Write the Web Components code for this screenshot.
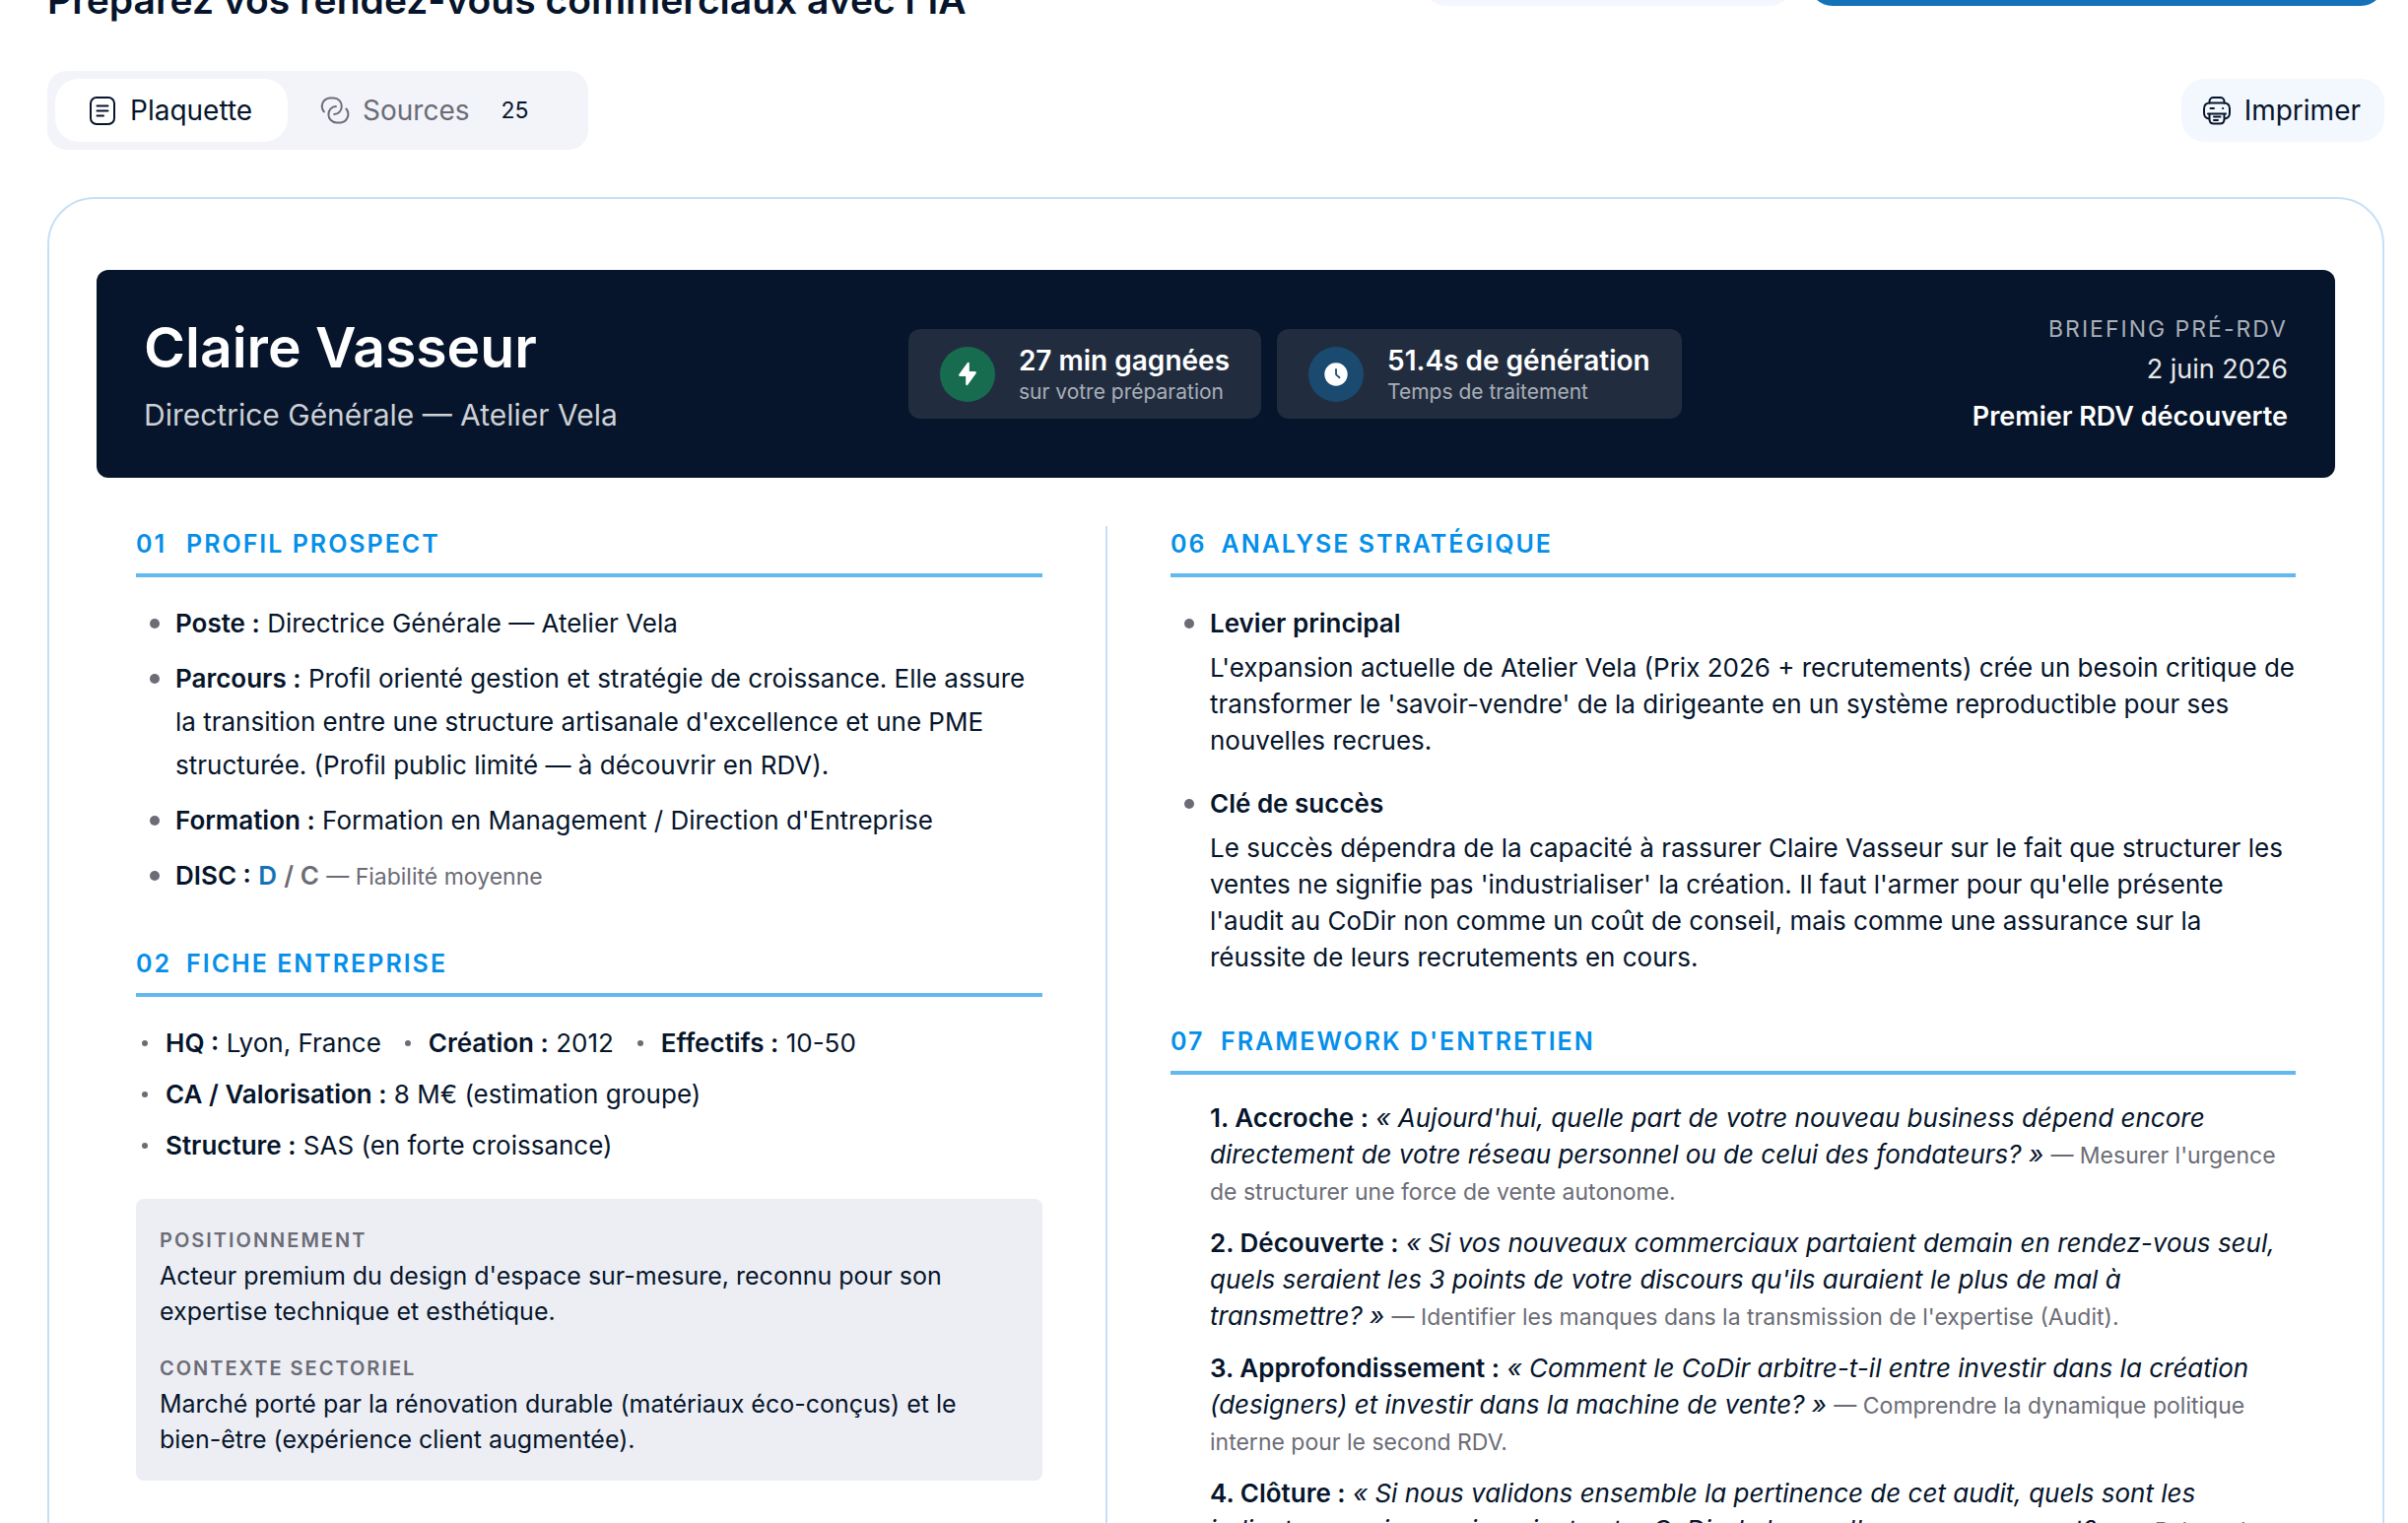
<!DOCTYPE html>
<html lang="fr">
<head>
<meta charset="utf-8">
<title>Plaquette – Claire Vasseur</title>
<style>
  :root {
    --ink: #06152b; --muted: #6b6c76; --brand: #1372b8; --accent: #058fe9;
    --rule: #62b9f0; --line: #c4e0f8; --soft: #f3f7fe; --panel: #edeef4;
    --fs-body: 26px; --fs-note: 23px;
  }
  html { scrollbar-width: none; }
  body { margin: 0; background: #fff; color: var(--ink); font: 400 26px/37px Inter, "Noto Sans", sans-serif; }
</style>
</head>
<body>
<briefing-page></briefing-page>

<script>
const define = (name, html) => {
  const tpl = document.createElement('template');
  tpl.innerHTML = html;
  customElements.define(name, class extends HTMLElement {
    constructor() {
      super();
      this.attachShadow({ mode: 'open' }).append(tpl.content.cloneNode(true));
    }
    connectedCallback() {
      this.shadowRoot.querySelectorAll('[data-attr]').forEach(n => {
        n.textContent = this.getAttribute(n.dataset.attr) || '';
      });
    }
  });
};

define('page-header', `
<style>
  :host { display: flex; justify-content: space-between; align-items: flex-start; height: 86px; margin-top: -58px; }
  h1 { align-self: flex-end; margin: 0; font-size: 39px; line-height: 56px; font-weight: 600; }
  .actions { display: flex; gap: 16px; }
  button { height: 64px; border: 0; border-radius: 24px; background: var(--soft); width: 376px; }
  .primary { background: var(--brand); width: 584px; }
</style>
<h1><slot></slot></h1>
<div class="actions"><button aria-label="Historique"></button><button class="primary" aria-label="Nouvelle préparation"></button></div>`);

define('view-tabs', `
<style>
  :host { display: flex; padding: 8px; border-radius: 20px; background: #f3f4f9; }
  button { display: flex; align-items: center; gap: 12px; height: 64px; padding: 0 32px; border: 0; border-radius: 24px;
    background: none; font: inherit; font-size: 28px; color: var(--muted); }
  button[aria-selected=true] { min-width: 236px; background: #fff; color: var(--ink); }
  svg { width: 32px; height: 32px; fill: none; stroke: currentColor; stroke-width: 2; stroke-linecap: round; stroke-linejoin: round; }
  .count { padding: 0 20px; font-size: 23px; color: var(--ink); }
</style>
<button role="tab" aria-selected="true">
  <svg viewBox="0 0 32 32"><rect x="4" y="3" width="24" height="27" rx="6"/><path d="M10.500 11.500h11M10.500 16.500h11M10.500 21.500h6.500"/></svg>
  Plaquette</button>
<button role="tab" aria-selected="false">
  <svg viewBox="0 0 32 32"><path d="M4.800 17.400a8.600 8.600 0 0 1 5.600-14h4.200a8.300 8.300 0 0 1 8.200 8.300c0 4.600-3.300 8.300-7.600 8.300"/><path d="M27.400 14.500a8.600 8.600 0 0 1-5.600 14h-4.200a8.300 8.300 0 0 1-8.200-8.300c0-4.600 3.300-8.300 7.600-8.300"/></svg>
  Sources <span class="count">25</span></button>`);

define('print-button', `
<style>
  :host { display: block; }
  button { display: flex; align-items: center; gap: 12px; height: 64px; padding: 0 24px 0 20px; border: 0; border-radius: 24px;
    background: var(--soft); font: inherit; font-size: 28px; color: var(--ink); }
  svg { width: 32px; height: 32px; fill: none; stroke: currentColor; stroke-width: 2; stroke-linecap: round; stroke-linejoin: round; }
</style>
<button>
  <svg viewBox="0 0 32 32"><path d="M8.500 8.500V7a4 4 0 0 1 4-4h7a4 4 0 0 1 4 4v1.500"/><path d="M8 24.500c-3-.3-5-2.200-5-6v-4c0-4 2-6 6-6h14c4 0 6 2 6 6v4c0 3.800-2 5.700-5 6"/><path d="M7 19.500h18M8.500 19.500V25c0 3 1.500 4.500 4.500 4.500h6c3 0 4.500-1.500 4.500-4.500v-5.500M13 22.500h6.500M13 26h4M9.500 14h3.500M22 14h.2"/></svg>
  <slot></slot></button>`);

define('stat-chip', `
<style>
  :host { display: flex; align-items: center; gap: 24px; padding: 14px 32px 13px; border-radius: 12px; background: #212d3f; }
  .dot { display: grid; place-items: center; width: 56px; height: 56px; border-radius: 50%; background: var(--dot); }
  .t { font-size: 28px; line-height: 36px; font-weight: 600; color: #fff; }
  .s { font-size: 21px; line-height: 28px; color: #a9aeb7; }
</style>
<div class="dot"><slot name="icon"></slot></div>
<div><div class="t" data-attr="value"></div><div class="s" data-attr="caption"></div></div>`);

define('briefing-hero', `
<style>
  :host { display: flex; justify-content: space-between; align-items: center; padding: 40px 48px; border-radius: 12px; background: var(--ink); color: #fff; }
  h2 { margin: 0 0 5px; font-size: 57px; line-height: 78px; font-weight: 600; }
  .role { font-size: 30px; line-height: 48px; color: #cdd0d5; }
  .stats { display: flex; gap: 16px; }
  .meta { padding-top: 2px; text-align: right; font-size: 27px; line-height: 44px; }
  .kicker { font-size: 23px; line-height: 37px; letter-spacing: 2px; color: #a9aeb7; }
  .date { color: #e6e8ea; margin-bottom: 4px; }
  .kind { font-weight: 600; }
  svg { display: block; width: 28px; height: 28px; }
</style>
<div><h2>Claire Vasseur</h2><div class="role">Directrice Générale — Atelier Vela</div></div>
<div class="stats">
  <stat-chip style="--dot:#176c50" value="27 min gagnées" caption="sur votre préparation">
    <svg slot="icon" viewBox="0 0 28 28" fill="#fff"><path d="M15.800 3.200v7.900h5.700c1.300 0 1.800 1.200 1 2.200l-8.200 11.200c-.8 1.100-2.100.7-2.100-.7v-7.900H6.500c-1.300 0-1.800-1.200-1-2.200l8.200-11.200c.8-1.100 2.100-.7 2.100.7z"/></svg>
  </stat-chip>
  <stat-chip style="--dot:#1a4a70" value="51.4s de génération" caption="Temps de traitement">
    <svg slot="icon" viewBox="0 0 28 28"><circle cx="14" cy="14" r="11.700" fill="#fff"/><path d="M14 9v4.500c0 .6.200 1 .7 1.400l2.800 2.300" fill="none" stroke="#1a4a70" stroke-width="1.800" stroke-linecap="round"/></svg>
  </stat-chip>
</div>
<div class="meta"><div class="kicker">BRIEFING PRÉ-RDV</div><div class="date">2 juin 2026</div><div class="kind">Premier RDV découverte</div></div>`);

define('brief-section', `
<style>
  :host { display: block; }
  h3 { display: flex; gap: 15px; margin: 0 0 25px; padding-bottom: 12px; border-bottom: 4px solid var(--rule);
    font-size: 25px; line-height: 36px; font-weight: 600; letter-spacing: 2px; color: var(--accent); }
  h3 span:first-child { min-width: 36px; }
</style>
<h3><span data-attr="num"></span><span data-attr="heading"></span></h3>
<slot></slot>`);

define('bullet-item', `
<style>
  :host { display: grid; grid-template-columns: 10px 1fr; column-gap: 16px; padding-left: 14px; margin-bottom: 12px; line-height: 44px; }
  :host(:last-child) { margin-bottom: 0; }
  .dot { width: 10px; height: 10px; margin-top: 17px; border-radius: 50%; background: var(--muted); }
  b { font-weight: 600; }
</style>
<span class="dot"></span><div><b data-attr="label"></b> <slot></slot></div>`);

define('fact-item', `
<style>
  :host { display: flex; align-items: center; gap: 18px; padding-left: 6px; line-height: 44px; }
  .dot { width: 6px; height: 6px; border-radius: 50%; background: var(--muted); }
  b { font-weight: 600; }
</style>
<span class="dot"></span><div><b data-attr="label"></b> <slot></slot></div>`);

define('context-panel', `
<style>
  :host { display: flex; flex-direction: column; gap: 22px; margin-top: 32px; padding: 24px; border-radius: 8px; background: var(--panel); }
</style><slot></slot>`);

define('context-note', `
<style>
  :host { display: block; font-size: 25px; line-height: 36px; }
  .k { font-size: 20px; font-weight: 600; letter-spacing: 2px; color: var(--muted); }
</style><div class="k" data-attr="label"></div><slot></slot>`);

define('insight-item', `
<style>
  :host { display: grid; grid-template-columns: 10px 1fr; column-gap: 16px; padding-left: 14px; margin-bottom: 24px; }
  :host(:last-child) { margin-bottom: 0; }
  .dot { width: 10px; height: 10px; margin-top: 17px; border-radius: 50%; background: var(--muted); }
  .k { margin-bottom: 4px; font-weight: 600; line-height: 44px; }
</style>
<span class="dot"></span><div><div class="k" data-attr="label"></div><slot></slot></div>`);

define('interview-step', `
<style>
  :host { display: block; padding-left: 40px; margin-bottom: 16px; }
  b { font-weight: 600; }
  .why { font-size: var(--fs-note); line-height: 28px; color: var(--muted); }
</style>
<b data-attr="label"></b> <i><slot></slot></i> <span class="why" data-attr="why"></span>`);

define('briefing-page', `
<style>
  :host { display: block; padding: 0 24px 0 48px; }
  .toolbar { display: flex; justify-content: space-between; align-items: center; margin: 44px 0 48px; }
  .card { border: 2px solid var(--line); border-radius: 48px; padding: 72px 48px 72px; }
  .cols { display: grid; grid-template-columns: 986px 1fr; margin-top: 49px; padding: 0 40px; }
  .col { display: flex; flex-direction: column; gap: 49px; }
  .col:first-child { padding-right: 64px; border-right: 2px solid var(--line); }
  .col:last-child { padding-left: 64px; }
  .facts { display: flex; flex-wrap: wrap; gap: 8px 18px; }
  .facts .wide { flex-basis: 100%; }
  .d { color: var(--brand); font-weight: 600; }
  .c { color: var(--muted); font-weight: 600; }
  .note { color: var(--muted); font-size: var(--fs-note); line-height: 28px; }
</style>
<page-header>Préparez vos rendez-vous commerciaux avec l'IA</page-header>
<div class="toolbar"><view-tabs role="tablist"></view-tabs><print-button>Imprimer</print-button></div>
<main class="card">
  <briefing-hero></briefing-hero>
  <div class="cols">
    <div class="col">
      <brief-section num="01" heading="PROFIL PROSPECT">
        <bullet-item label="Poste :">Directrice Générale — Atelier Vela</bullet-item>
        <bullet-item label="Parcours :">Profil orienté gestion et stratégie de croissance. Elle assure la transition entre une structure artisanale d'excellence et une PME structurée. (Profil public limité — à découvrir en RDV).</bullet-item>
        <bullet-item label="Formation :">Formation en Management / Direction d'Entreprise</bullet-item>
        <bullet-item label="DISC :"><span class="d">D</span> <span class="c">/ C</span> <span class="note">— Fiabilité moyenne</span></bullet-item>
      </brief-section>
      <brief-section num="02" heading="FICHE ENTREPRISE">
        <div class="facts">
          <fact-item label="HQ :">Lyon, France</fact-item>
          <fact-item label="Création :">2012</fact-item>
          <fact-item label="Effectifs :">10-50</fact-item>
          <fact-item class="wide" label="CA / Valorisation :">8 M€ (estimation groupe)</fact-item>
          <fact-item class="wide" label="Structure :">SAS (en forte croissance)</fact-item>
        </div>
        <context-panel>
          <context-note label="POSITIONNEMENT">Acteur premium du design d'espace sur-mesure, reconnu pour son expertise technique et esthétique.</context-note>
          <context-note label="CONTEXTE SECTORIEL">Marché porté par la rénovation durable (matériaux éco-conçus) et le bien-être (expérience client augmentée).</context-note>
        </context-panel>
      </brief-section>
    </div>
    <div class="col">
      <brief-section num="06" heading="ANALYSE STRATÉGIQUE">
        <insight-item label="Levier principal">L'expansion actuelle de Atelier Vela (Prix 2026 + recrutements) crée un besoin critique de transformer le 'savoir-vendre' de la dirigeante en un système reproductible pour ses nouvelles recrues.</insight-item>
        <insight-item label="Clé de succès">Le succès dépendra de la capacité à rassurer Claire Vasseur sur le fait que structurer les ventes ne signifie pas 'industrialiser' la création. Il faut l'armer pour qu'elle présente l'audit au CoDir non comme un coût de conseil, mais comme une assurance sur la réussite de leurs recrutements en cours.</insight-item>
      </brief-section>
      <brief-section num="07" heading="FRAMEWORK D'ENTRETIEN">
        <interview-step label="1. Accroche :" why="— Mesurer l'urgence de structurer une force de vente autonome.">« Aujourd'hui, quelle part de votre nouveau business dépend encore directement de votre réseau personnel ou de celui des fondateurs?&nbsp;»</interview-step>
        <interview-step label="2. Découverte :" why="— Identifier les manques dans la transmission de l'expertise (Audit).">« Si vos nouveaux commerciaux partaient demain en rendez-vous seul, quels seraient les 3 points de votre discours qu'ils auraient le plus de mal à transmettre?&nbsp;»</interview-step>
        <interview-step label="3. Approfondissement :" why="— Comprendre la dynamique politique interne pour le second RDV.">« Comment le CoDir arbitre-t-il entre investir dans la création (designers) et investir dans la machine de vente?&nbsp;»</interview-step>
        <interview-step label="4. Clôture :" why="— Relever les critères de décision.">« Si nous validons ensemble la pertinence de cet audit, quels sont les indicateurs qui convaincraient votre CoDir de lancer l'accompagnement?&nbsp;»</interview-step>
      </brief-section>
    </div>
  </div>
</main>`);
</script>
</body>
</html>
